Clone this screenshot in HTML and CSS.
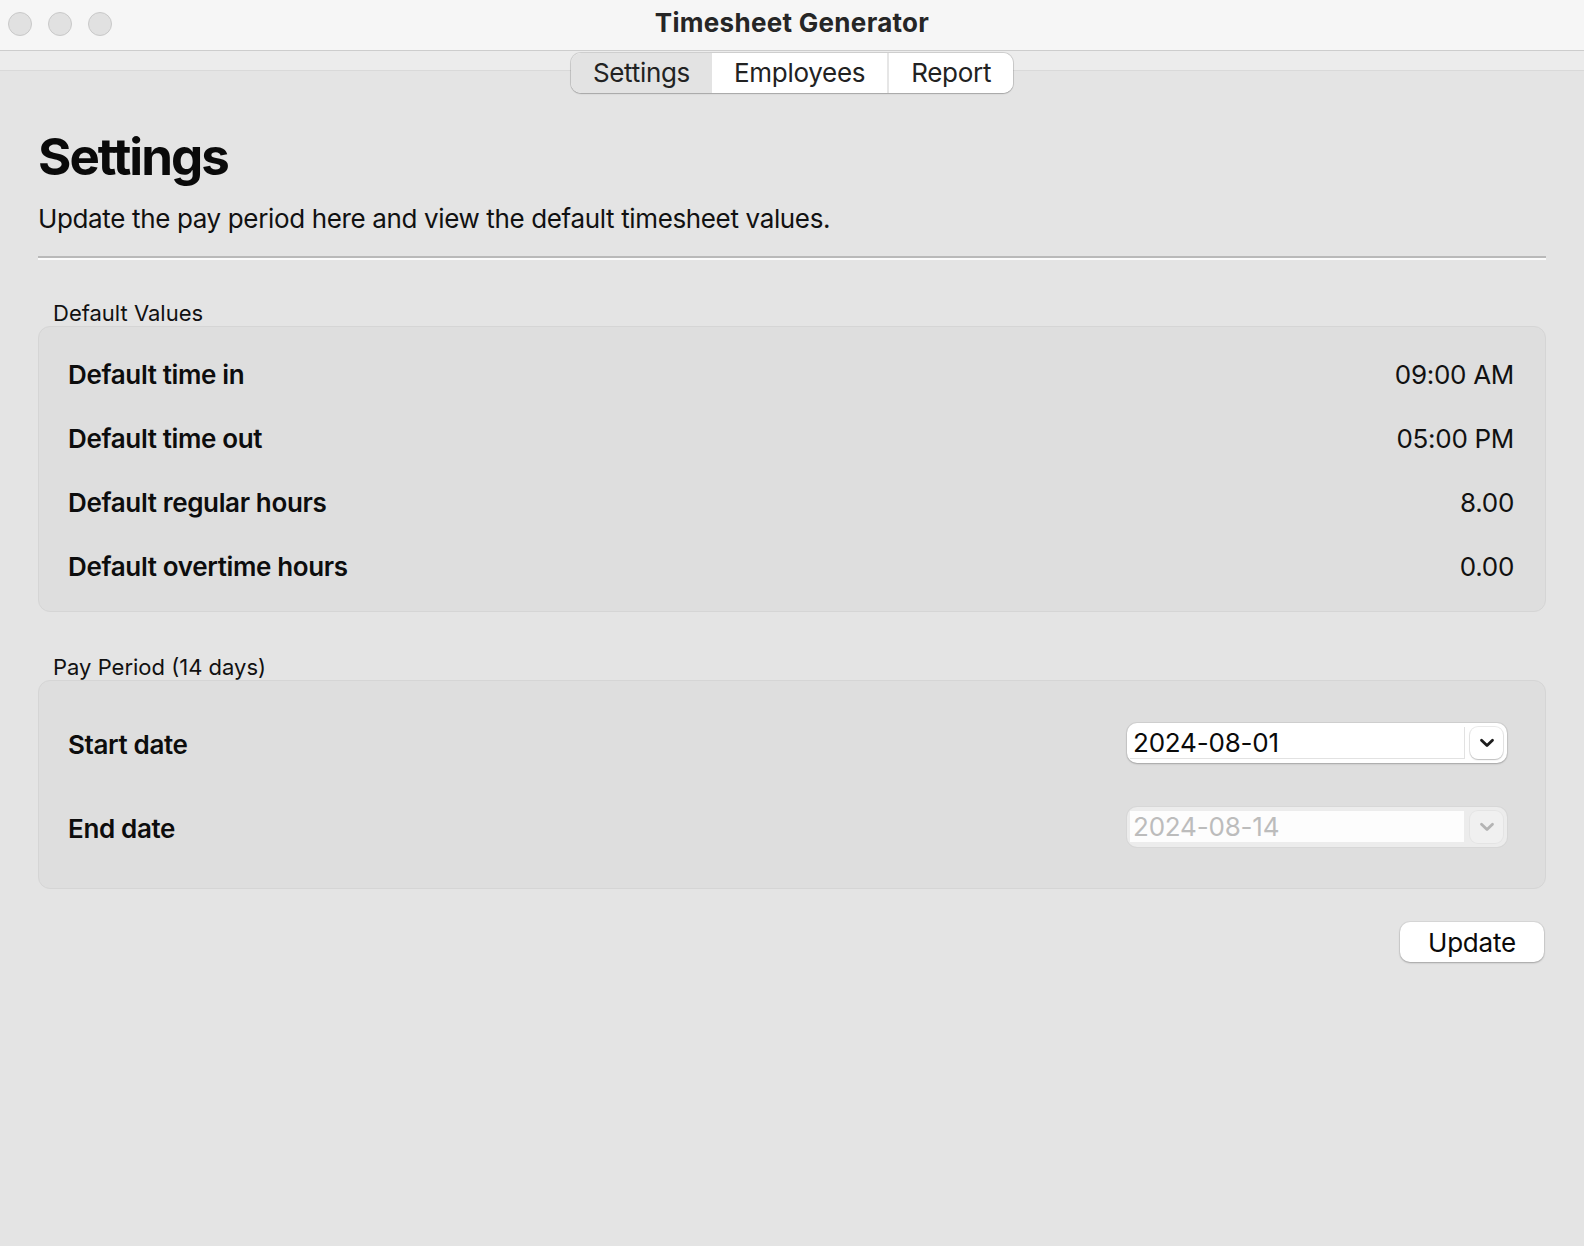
FILE: index.html
```html
<!DOCTYPE html>
<html lang="en">
<head>
<meta charset="utf-8">
<title>Timesheet Generator</title>
<link rel="stylesheet" href="styles.css">
</head>
<body>
<div class="window">
  <header class="titlebar">
    <div class="lights">
      <span class="light"></span>
      <span class="light"></span>
      <span class="light"></span>
    </div>
    <div class="title">Timesheet Generator</div>
    <div class="spacer"></div>
  </header>

  <nav class="tabbar">
    <div class="segmented">
      <button class="seg seg-active">Settings</button>
      <button class="seg seg-mid">Employees</button>
      <button class="seg">Report</button>
    </div>
  </nav>

  <main class="content">
    <h1 class="heading">Settings</h1>
    <p class="subtitle">Update the pay period here and view the default timesheet values.</p>
    <div class="divider"></div>

    <section class="group">
      <div class="group-label">Default Values</div>
      <div class="group-box box-values">
        <div class="row"><span class="row-label">Default time in</span><span class="row-value">09:00 AM</span></div>
        <div class="row"><span class="row-label">Default time out</span><span class="row-value">05:00 PM</span></div>
        <div class="row"><span class="row-label">Default regular hours</span><span class="row-value">8.00</span></div>
        <div class="row"><span class="row-label">Default overtime hours</span><span class="row-value">0.00</span></div>
      </div>
    </section>

    <section class="group group-second">
      <div class="group-label">Pay Period (14 days)</div>
      <div class="group-box box-dates">
        <div class="row row-date">
          <span class="row-label">Start date</span>
          <div class="datefield">
            <span class="date-text">2024-08-01</span>
            <span class="date-btn">
              <svg width="16" height="10" viewBox="0 0 16 10"><path d="M2.5 2.2 L8 7.6 L13.5 2.2" fill="none" stroke="#1d1d1d" stroke-width="2.8" stroke-linecap="round" stroke-linejoin="round"/></svg>
            </span>
          </div>
        </div>
        <div class="row row-date">
          <span class="row-label">End date</span>
          <div class="datefield datefield-disabled">
            <span class="date-text">2024-08-14</span>
            <span class="date-btn">
              <svg width="16" height="10" viewBox="0 0 16 10"><path d="M2.5 2.2 L8 7.6 L13.5 2.2" fill="none" stroke="#b4b4b4" stroke-width="2.8" stroke-linecap="round" stroke-linejoin="round"/></svg>
            </span>
          </div>
        </div>
      </div>
    </section>

    <div class="actions">
      <button class="btn">Update</button>
    </div>
  </main>
</div>
</body>
</html>
```

FILE: styles.css
```css
* { box-sizing: border-box; }

html, body {
  margin: 0;
  padding: 0;
  height: 100%;
}

body {
  font-family: Inter, "Liberation Sans", sans-serif;
  color: #111;
  background: #e4e4e4;
}

.window {
  min-height: 100vh;
  display: flex;
  flex-direction: column;
  background: #e4e4e4;
}

/* Title bar */
.titlebar {
  height: 51px;
  background: #f6f6f6;
  border-bottom: 1px solid #cdcdcd;
  display: grid;
  grid-template-columns: 1fr auto 1fr;
  align-items: center;
}

.lights {
  display: flex;
  gap: 16px;
  padding-left: 8px;
  padding-bottom: 2px;
}

.light {
  width: 24px;
  height: 24px;
  border-radius: 50%;
  background: #e1e1e1;
  border: 1px solid #c9c9c9;
}

.title {
  font-size: 26px;
  font-weight: 700;
  letter-spacing: 0.3px;
  color: #262626;
  line-height: 30px;
  padding-bottom: 4px;
}

/* Tab bar */
.tabbar {
  height: 42px;
  display: flex;
  justify-content: center;
  align-items: flex-start;
  background: linear-gradient(to bottom, #ececec 0, #ececec 19px, #d9d9d9 19px, #d9d9d9 20px, #e4e4e4 20px);
}

.segmented {
  margin-top: 2px;
  display: flex;
  height: 40px;
  border-radius: 10px;
  background: #ffffff;
  box-shadow: 0 0 0 1px rgba(0, 0, 0, 0.12), 0 1px 1.5px rgba(0, 0, 0, 0.18);
  overflow: hidden;
}

.seg {
  font-family: inherit;
  font-size: 26px;
  letter-spacing: -0.3px;
  color: #222;
  background: #ffffff;
  border: 0;
  padding: 0 22px;
  height: 40px;
  line-height: 40px;
  cursor: default;
}

.seg-active {
  background: #e3e3e3;
}

.seg-mid {
  border-right: 2px solid #e6e6e6;
}

/* Content */
.content {
  padding: 0 38px;
  display: flex;
  flex-direction: column;
}

.heading {
  margin: 34px 0 0;
  font-size: 51px;
  line-height: 60px;
  font-weight: 700;
  letter-spacing: -2px;
  color: #0a0a0a;
}

.subtitle {
  margin: 16px 0 0;
  font-size: 26px;
  line-height: 32px;
  letter-spacing: -0.36px;
  color: #111;
}

.divider {
  margin-top: 21px;
  height: 4px;
  border-top: 2px solid #b9b9b9;
  border-bottom: 2px solid #fbfbfb;
}

.group {
  margin-top: 40px;
}

.group-second {
  margin-top: 42px;
}

.group-label {
  font-size: 22px;
  line-height: 26px;
  padding-left: 15px;
  color: #111;
}

.group-box {
  background: #dedede;
  border: 1px solid #d5d5d5;
  border-radius: 12px;
}

.box-values {
  padding: 16px 31px 12px 29px;
}

.box-dates {
  padding: 20px 31px 19px 29px;
}

.row {
  height: 64px;
  display: flex;
  align-items: center;
  justify-content: space-between;
}

.row-date {
  height: 84px;
}

.row-date .row-label {
  padding-top: 3px;
}

.row-label {
  font-size: 26px;
  line-height: 32px;
  font-weight: 600;
  letter-spacing: -0.35px;
  color: #0d0d0d;
}

.row-value {
  font-size: 26px;
  line-height: 32px;
  letter-spacing: -0.3px;
  color: #111;
}

/* Date field */
.datefield {
  width: 380px;
  height: 40px;
  margin-right: 7px;
  border-radius: 10px;
  background: #ffffff;
  box-shadow: 0 0 0 1px rgba(0, 0, 0, 0.06), 0 1px 2px rgba(0, 0, 0, 0.22);
  display: flex;
  align-items: center;
  padding: 4px 4px 4px 3px;
  gap: 5px;
}

.date-text {
  flex: 1;
  height: 32px;
  font-size: 26px;
  line-height: 32px;
  letter-spacing: -0.2px;
  padding-left: 3px;
  color: #0a0a0a;
  background: #ffffff;
  border-right: 1px solid #e2e2e2;
  border-bottom: 1px solid #e2e2e2;
}

.date-btn {
  width: 33px;
  height: 32px;
  border-radius: 8px;
  background: #ffffff;
  box-shadow: 0 0 0 1px rgba(0, 0, 0, 0.08), 0 1px 1.5px rgba(0, 0, 0, 0.2);
  display: flex;
  align-items: center;
  justify-content: center;
}

.datefield-disabled {
  background: #ececec;
  box-shadow: 0 0 0 1px rgba(0, 0, 0, 0.03);
}

.datefield-disabled .date-text {
  color: #bcbcbc;
  background: #fdfdfd;
  border-color: #ececec;
}

.datefield-disabled .date-btn {
  background: #f0f0f0;
  box-shadow: 0 0 0 1px rgba(0, 0, 0, 0.03);
}

/* Actions */
.actions {
  display: flex;
  justify-content: flex-end;
  margin-top: 33px;
  padding-right: 2px;
}

.btn {
  font-family: inherit;
  font-size: 26px;
  letter-spacing: -0.2px;
  color: #0a0a0a;
  width: 144px;
  height: 40px;
  border: 0;
  border-radius: 10px;
  background: #ffffff;
  box-shadow: 0 0 0 1px rgba(0, 0, 0, 0.05), 0 1px 2px rgba(0, 0, 0, 0.25);
  cursor: default;
}
```
